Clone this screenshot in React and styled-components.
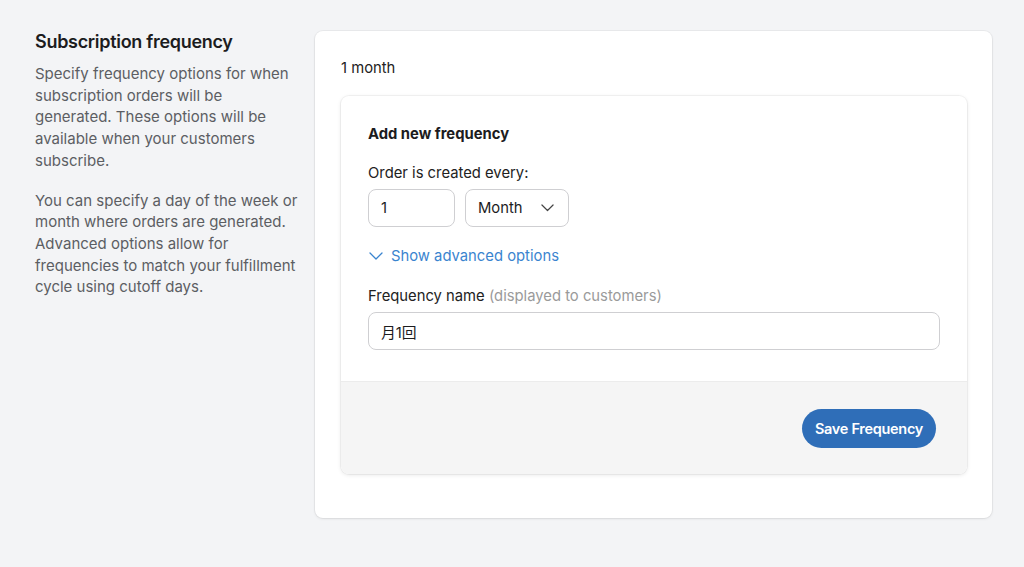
import React from "react";
import styled, { createGlobalStyle } from "styled-components";

const GlobalStyle = createGlobalStyle`
  html, body {
    margin: 0;
    padding: 0;
    background: #f3f4f6;
    font-family: Inter, "Noto Sans", "Noto Sans CJK JP", sans-serif;
    -webkit-font-smoothing: antialiased;
  }
  * { box-sizing: border-box; }
`;

const Page = styled.div`
  display: flex;
  align-items: flex-start;
  gap: 16px;
  padding: 31px 32px 0 35px;
  width: 1024px;
  height: 567px;
`;

const Aside = styled.div`
  width: 264px;
  flex-shrink: 0;
`;

const Title = styled.h2`
  margin: 0 0 10px;
  font-size: 18px;
  font-weight: 600;
  letter-spacing: -0.3px;
  color: #1c1c1e;
  line-height: 22px;
`;

const Text = styled.p`
  margin: 0 0 18px;
  font-size: 15px;
  line-height: 21.7px;
  color: #5c5e63;
`;

const Card = styled.div`
  flex: 1;
  background: #fff;
  border-radius: 8px;
  box-shadow: 0 0 0 1px rgba(0, 0, 0, 0.04), 0 1px 3px rgba(0, 0, 0, 0.08);
  padding: 27px 25px 44px 26px;
`;

const Current = styled.div`
  font-size: 14.8px;
  color: #222;
  line-height: 20px;
  margin-bottom: 18px;
`;

const Inner = styled.div`
  border-radius: 8px;
  overflow: hidden;
  box-shadow: 0 0 0 1px rgba(0, 0, 0, 0.04), 0 1px 4px rgba(0, 0, 0, 0.1);
`;

const Body = styled.div`
  padding: 28px 27px 31px;
  display: flex;
  flex-direction: column;
`;

const Heading = styled.div`
  font-size: 14.8px;
  font-weight: 700;
  color: #1c1c1e;
  line-height: 20px;
  margin-bottom: 19px;
`;

const Label = styled.div`
  font-size: 14.8px;
  color: #222;
  line-height: 20px;
  margin-bottom: 6px;
`;

const Muted = styled.span`
  color: #9a9a9a;
`;

const Row = styled.div`
  display: flex;
  gap: 10px;
`;

const Field = styled.div`
  height: 38px;
  width: ${p => p.$width || "100%"};
  border: 1px solid #cfcfd2;
  border-radius: 8px;
  background: #fff;
  display: flex;
  align-items: center;
  justify-content: space-between;
  padding: 0 14px 0 12px;
  font-size: 14.8px;
  color: #1c1c1e;
`;

const Toggle = styled.div`
  display: flex;
  align-items: center;
  gap: 8px;
  margin: 19px 0 20px 1px;
  font-size: 14.8px;
  color: #3a84cf;
  line-height: 20px;
`;

const Footer = styled.div`
  background: #f5f5f5;
  border-top: 1px solid #ececec;
  height: 93px;
  display: flex;
  align-items: center;
  justify-content: flex-end;
  padding: 0 31px 0 0;
`;

const Button = styled.button`
  height: 39px;
  padding: 0 13px;
  border: none;
  border-radius: 20px;
  background: #2f6eb8;
  color: #fff;
  font-family: inherit;
  font-size: 14.5px;
  font-weight: 600;
  letter-spacing: -0.3px;
`;

const Chevron = ({ color, w = 14 }) => (
  <svg width={w} height={w / 2 + 1} viewBox="0 0 14 8" fill="none">
    <path d="M1 1l6 6 6-6" stroke={color} strokeWidth="1.3" strokeLinecap="round" strokeLinejoin="round" />
  </svg>
);

export default function App() {
  return (
    <>
      <GlobalStyle />
      <Page>
        <Aside>
          <Title>Subscription frequency</Title>
          <Text>
            Specify frequency options for when subscription orders will be
            generated. These options will be available when your customers
            subscribe.
          </Text>
          <Text>
            You can specify a day of the week or month where orders are
            generated. Advanced options allow for frequencies to match your
            fulfillment cycle using cutoff days.
          </Text>
        </Aside>
        <Card>
          <Current>1 month</Current>
          <Inner>
            <Body>
              <Heading>Add new frequency</Heading>
              <Label>Order is created every:</Label>
              <Row>
                <Field $width="87px">1</Field>
                <Field $width="104px">
                  Month
                  <Chevron color="#444" w={13} />
                </Field>
              </Row>
              <Toggle>
                <Chevron color="#3a84cf" />
                Show advanced options
              </Toggle>
              <Label>
                Frequency name <Muted>(displayed to customers)</Muted>
              </Label>
              <Field>月1回</Field>
            </Body>
            <Footer>
              <Button>Save Frequency</Button>
            </Footer>
          </Inner>
        </Card>
      </Page>
    </>
  );
}
